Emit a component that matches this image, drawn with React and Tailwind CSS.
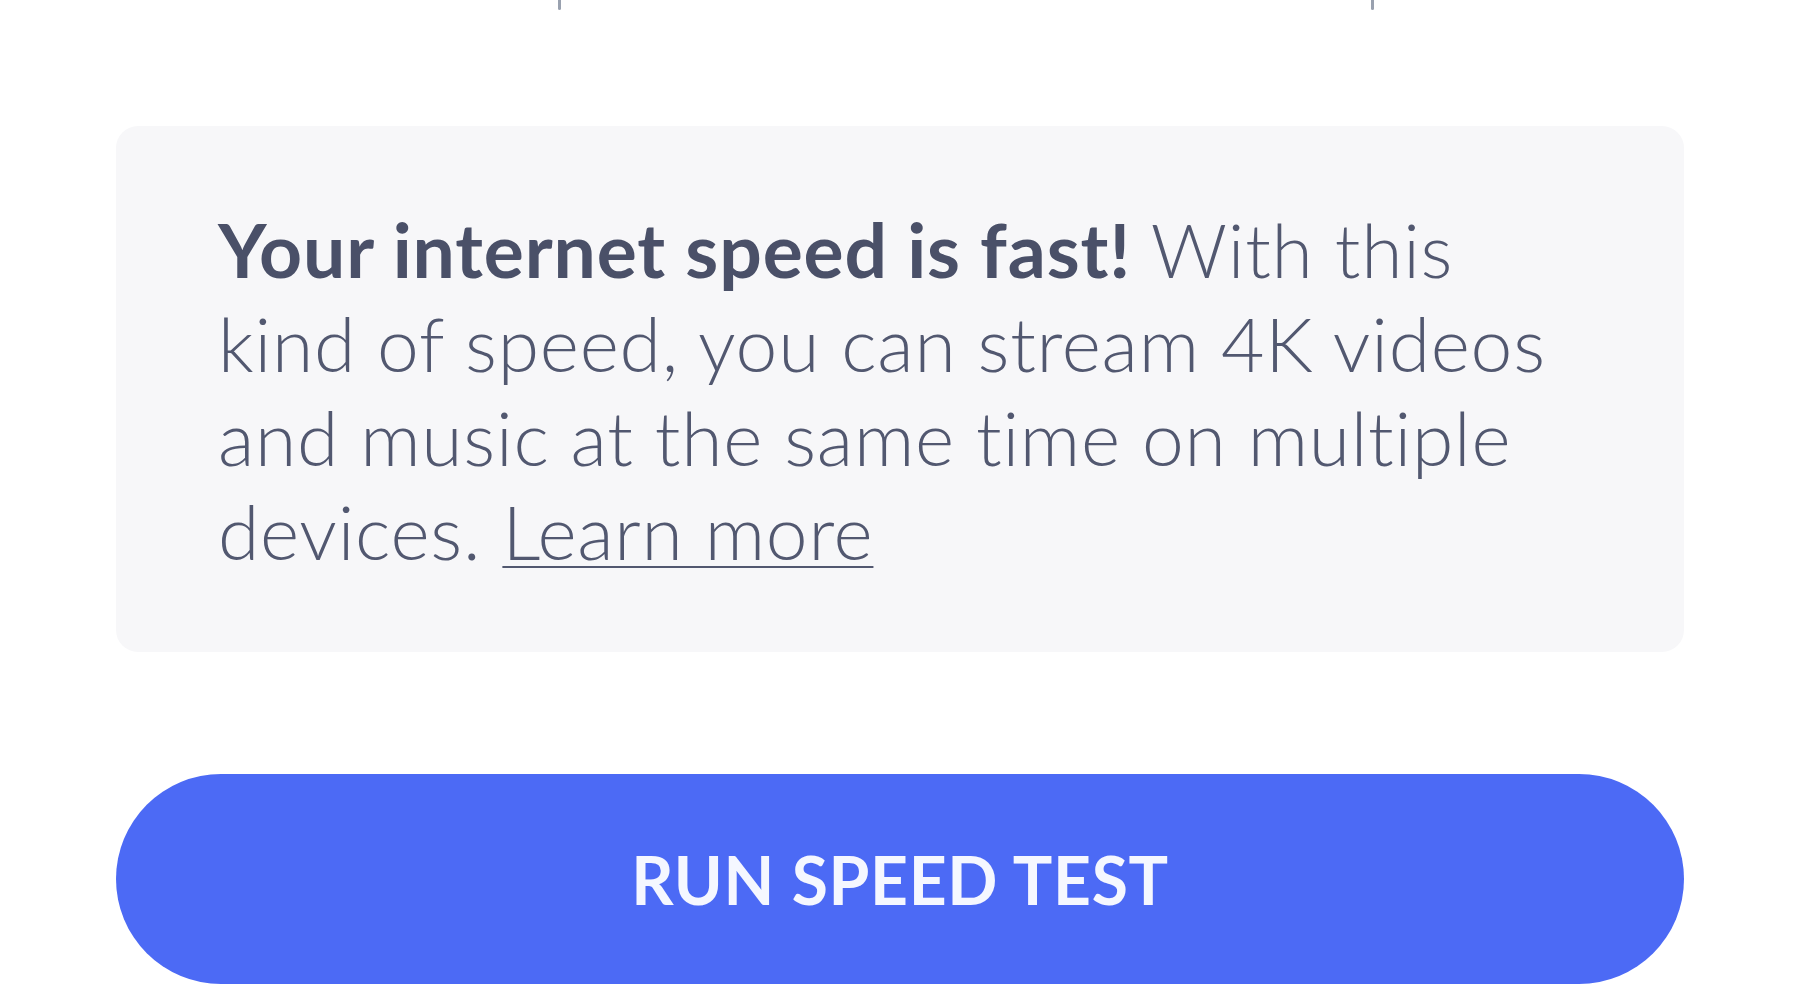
const App = () => {
  return (
    <div className="w-[1800px] h-[1000px] bg-white overflow-hidden font-['Lato','Liberation_Sans',sans-serif]">
      {/* cut-off descenders from the row above */}
      <div className="flex h-[10px]">
        <div className="ml-[558px] w-[3px] h-[10px] bg-gray-400 rounded-b" />
        <div className="ml-[810px] w-[3px] h-[10px] bg-gray-400 rounded-b" />
      </div>

      <div className="mx-auto w-[1568px] mt-[116px]">
        {/* RESULT CARD */}
        <div className="bg-[#f7f7f9] rounded-[22px] px-[102px] pt-[76px] pb-[75px] h-[526px]">
          <p className="text-[75px] leading-[94px] font-light text-[#525870] tracking-[0.01em]">
            <span className="font-bold text-[#4a5068] tracking-[0.012em]">Your internet speed is fast!</span>{" "}
            With this
            <br />
            kind of speed, you can stream 4K videos
            <br />
            and music at the same time on multiple
            <br />
            devices.{" "}
            <a href="#" className="underline decoration-[2px] underline-offset-[6px]">Learn more</a>
          </p>
        </div>

        {/* RUN BUTTON */}
        <button className="mt-[122px] w-full h-[210px] rounded-full bg-[#4c6af5] text-[#f5f7ff] text-[66px] font-bold tracking-[0.01em]">
          RUN SPEED TEST
        </button>
      </div>
    </div>
  );
};

export default App;
